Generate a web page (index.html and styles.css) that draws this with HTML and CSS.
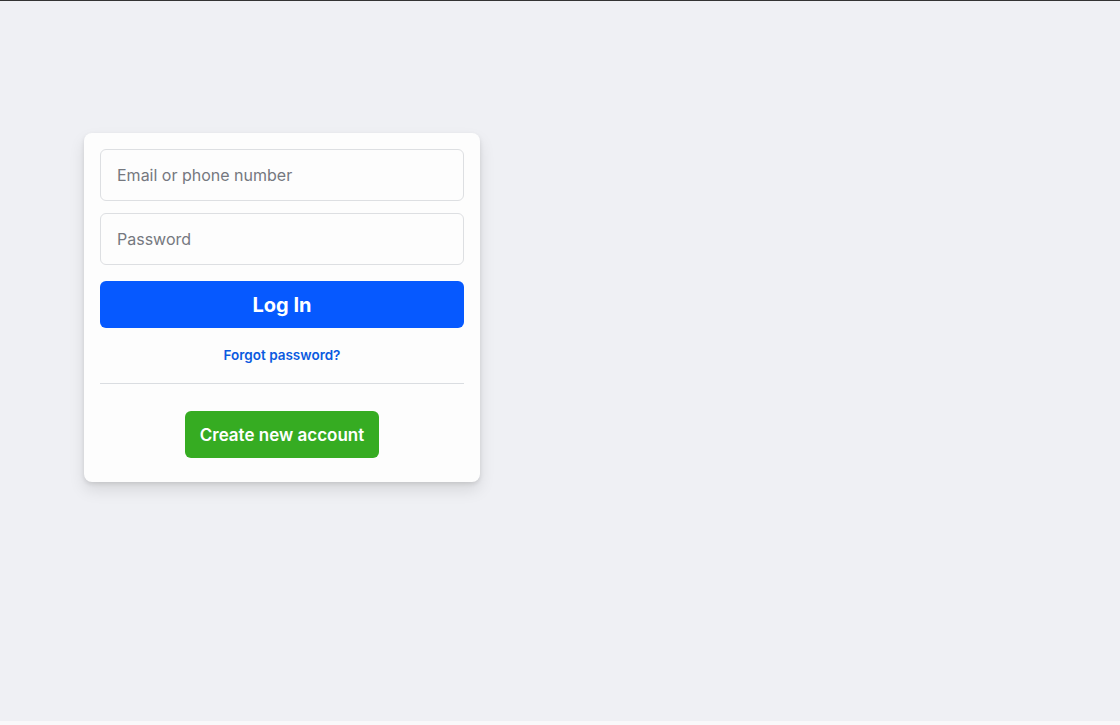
FILE: index.html
```html
<!DOCTYPE html>
<html lang="en">
<head>
    <meta charset="UTF-8">
    <meta name="viewport" content="width=device-width, initial-scale=1.0">
    <title>Log In</title>
    <link rel="stylesheet" href="styles.css">
</head>
<body>
    <div class="page">
        <form class="login-card">
            <input class="field" type="text" placeholder="Email or phone number">
            <input class="field" type="password" placeholder="Password">
            <button class="login-btn" type="button">Log In</button>
            <a class="forgot" href="#">Forgot password?</a>
            <div class="divider"></div>
            <div class="create-row">
                <button class="create-btn" type="button">Create new account</button>
            </div>
        </form>
    </div>
    <div class="bottom-strip"></div>
</body>
</html>
```

FILE: styles.css
```css
*{
    box-sizing: border-box;
    margin: 0;
    padding: 0;
}

body{
    font-family: Inter, 'Helvetica Neue', Arial, sans-serif;
    background-color: #eff0f4;
    border-top: 1px solid #333;
    height: 725px;
    display: flex;
    flex-direction: column;
    overflow: hidden;
}

.page{
    flex: 1;
    padding: 132px 0 0 84px;
}

.login-card{
    width: 396px;
    background-color: #fdfdfd;
    border-radius: 8px;
    padding: 16px 16px 24px;
    box-shadow: 0 2px 4px rgba(0, 0, 0, 0.1), 0 8px 16px rgba(0, 0, 0, 0.1);
    display: flex;
    flex-direction: column;
}

.field{
    height: 52px;
    border: 1px solid #dddfe2;
    border-radius: 6px;
    padding: 0 16px;
    background-color: #fdfdfd;
    font-family: inherit;
    font-size: 16px;
    color: #1c1e21;
    margin-bottom: 12px;
    outline: none;
}

.field::placeholder{
    color: #75787f;
}

.login-btn{
    margin-top: 4px;
    height: 47px;
    border: 0;
    border-radius: 6px;
    background-color: #0659ff;
    color: #fff;
    font-family: inherit;
    font-size: 20px;
    font-weight: 700;
}

.forgot{
    margin-top: 18px;
    text-align: center;
    color: #0a5ae0;
    font-size: 13.5px;
    font-weight: 600;
    text-decoration: none;
    line-height: 18px;
}

.divider{
    margin-top: 19px;
    height: 1px;
    background-color: #dadde1;
}

.create-row{
    display: flex;
    justify-content: center;
    margin-top: 27px;
}

.create-btn{
    width: 194px;
    height: 47px;
    border: 0;
    border-radius: 6px;
    background-color: #36ac22;
    color: #fff;
    font-family: inherit;
    font-size: 17px;
    font-weight: 600;
}

.bottom-strip{
    height: 4px;
    background-color: #f9f9fa;
}
```
